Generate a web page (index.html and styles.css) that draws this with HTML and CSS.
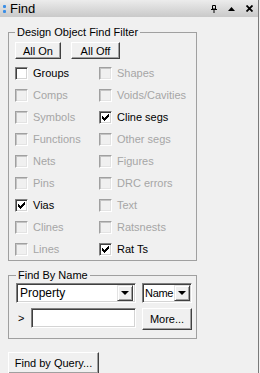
FILE: index.html
```html
<!DOCTYPE html>
<html lang="en">
<head>
    <meta charset="UTF-8">
    <meta name="viewport" content="width=device-width, initial-scale=1.0">
    <title>Find</title>
    <link rel="stylesheet" href="styles.css">
</head>
<body>
    <div class="panel">
        <div class="titlebar">
            <span class="grip"><i></i><i></i></span>
            <span class="title">Find</span>
            <span class="tools">
                <svg width="6" height="8" viewBox="0 0 6 8"><path d="M1.5 0.5h3v3.5h-3z M0 4.5h6 M3 4.5v3.5" fill="none" stroke="#000" stroke-width="1"/></svg>
                <svg width="7" height="4" viewBox="0 0 7 4"><path d="M3.5 0L7 4H0z" fill="#000"/></svg>
                <svg width="7" height="7" viewBox="0 0 7 7"><path d="M0.5 0.5L6.5 6.5M6.5 0.5L0.5 6.5" stroke="#000" stroke-width="1.8"/></svg>
            </span>
        </div>

        <div class="body">
            <fieldset class="group filter">
                <legend>Design Object Find Filter</legend>
                <div class="btnrow">
                    <button class="btn on">All On</button>
                    <button class="btn off">All Off</button>
                </div>
                <div class="checks">
                    <label class="check"><span class="box"></span>Groups</label>
                    <label class="check dis"><span class="box"></span>Shapes</label>
                    <label class="check dis"><span class="box"></span>Comps</label>
                    <label class="check dis"><span class="box"></span>Voids/Cavities</label>
                    <label class="check dis"><span class="box"></span>Symbols</label>
                    <label class="check"><span class="box"><svg class="tick" width="7" height="7" viewBox="0 0 7 7"><path d="M0 2h1v1h1v1h1v-1h1v-1h1v-1h1v-1h1v3h-1v1h-1v1h-1v1h-1v1h-1v-1h-1v-1h-1v-1h-1z"/></svg></span>Cline segs</label>
                    <label class="check dis"><span class="box"></span>Functions</label>
                    <label class="check dis"><span class="box"></span>Other segs</label>
                    <label class="check dis"><span class="box"></span>Nets</label>
                    <label class="check dis"><span class="box"></span>Figures</label>
                    <label class="check dis"><span class="box"></span>Pins</label>
                    <label class="check dis"><span class="box"></span>DRC errors</label>
                    <label class="check"><span class="box"><svg class="tick" width="7" height="7" viewBox="0 0 7 7"><path d="M0 2h1v1h1v1h1v-1h1v-1h1v-1h1v-1h1v3h-1v1h-1v1h-1v1h-1v1h-1v-1h-1v-1h-1v-1h-1z"/></svg></span>Vias</label>
                    <label class="check dis"><span class="box"></span>Text</label>
                    <label class="check dis"><span class="box"></span>Clines</label>
                    <label class="check dis"><span class="box"></span>Ratsnests</label>
                    <label class="check dis"><span class="box"></span>Lines</label>
                    <label class="check"><span class="box"><svg class="tick" width="7" height="7" viewBox="0 0 7 7"><path d="M0 2h1v1h1v1h1v-1h1v-1h1v-1h1v-1h1v3h-1v1h-1v1h-1v1h-1v1h-1v-1h-1v-1h-1v-1h-1z"/></svg></span>Rat Ts</label>
                </div>
            </fieldset>

            <fieldset class="group byname">
                <legend>Find By Name</legend>
                <div class="namerow">
                    <div class="combo prop"><span class="value">Property</span><span class="drop"></span></div>
                    <div class="combo kind"><span class="value">Name</span><span class="drop"></span></div>
                </div>
                <div class="namerow second">
                    <span class="prompt">&gt;</span>
                    <input class="field" type="text">
                    <button class="btn more">More...</button>
                </div>
            </fieldset>

            <button class="btn query">Find by Query...</button>
        </div>
    </div>
</body>
</html>
```

FILE: styles.css
```css
body {
    margin: 0;
    padding: 0;
    background-color: #f0f0f0;
    font-family: "Liberation Sans", Arial, sans-serif;
    font-size: 11px;
    color: #000;
}

.panel {
    width: 258px;
    height: 373px;
    border-right: 1px solid #7a7a7a;
    background-color: #f0f0f0;
    overflow: hidden;
}

/* title bar */

.titlebar {
    height: 17px;
    display: flex;
    align-items: center;
    background: linear-gradient(#ececec, #c9c9c9);
}

.grip {
    display: flex;
    flex-direction: column;
    gap: 2px;
    margin-left: 3px;
    width: 3px;
}

.grip i {
    display: block;
    width: 3px;
    height: 3px;
    border-radius: 1px;
    background-color: #3a8ee6;
}

.title {
    margin-left: 4px;
    font-size: 13px;
}

.tools {
    margin-left: auto;
    display: flex;
    align-items: center;
    gap: 11px;
    margin-right: 5px;
}

.tools svg {
    display: block;
}

/* group boxes */

.body {
    padding-left: 8px;
}

.group {
    margin: 0;
    border: 1px solid #a0a0a0;
    padding: 0 0 0 6px;
    box-sizing: border-box;
    width: 189px;
}

.group legend {
    padding: 0 2px;
    line-height: 13px;
}

.filter {
    margin-top: 9px;
}

.btnrow {
    display: flex;
    gap: 10px;
    margin-top: 3px;
    margin-bottom: 3px;
}

.btn {
    font-family: "Liberation Sans", Arial, sans-serif;
    font-size: 11px;
    color: #000;
    background-color: #f0f0f0;
    border-top: 1px solid #fff;
    border-left: 1px solid #fff;
    border-right: 1px solid #404040;
    border-bottom: 1px solid #404040;
    box-shadow: inset -1px -1px 0 #a0a0a0;
    padding: 0;
    margin: 0;
    height: 17px;
    line-height: 14px;
}

.on {
    width: 46px;
}

.off {
    width: 49px;
}

.checks {
    display: grid;
    grid-template-columns: 84px 1fr;
    grid-auto-rows: 22px;
}

.check {
    display: flex;
    align-items: center;
    gap: 5px;
}

.check.dis {
    color: #a6a6a6;
}

.box {
    width: 13px;
    height: 13px;
    box-sizing: border-box;
    background-color: #fff;
    border-top: 1px solid #808080;
    border-left: 1px solid #808080;
    border-right: 1px solid #fff;
    border-bottom: 1px solid #fff;
    box-shadow: inset 1px 1px 0 #404040, inset -1px -1px 0 #d4d4d4;
    display: flex;
    align-items: center;
    justify-content: center;
}

.dis .box {
    background-color: #f0f0f0;
    border-top-color: #a0a0a0;
    border-left-color: #a0a0a0;
    box-shadow: inset 1px 1px 0 #c4c4c4, inset -1px -1px 0 #e3e3e3;
}

.tick {
    display: block;
    fill: #000;
}

/* find by name */

.byname {
    margin-top: 8px;
    padding: 1px 0 8px 7px;
}

.namerow {
    display: flex;
    align-items: center;
    gap: 6px;
}

.namerow.second {
    margin-top: 3px;
    gap: 0;
}

.combo {
    height: 20px;
    box-sizing: border-box;
    background-color: #fff;
    border-top: 1px solid #808080;
    border-left: 1px solid #808080;
    border-right: 1px solid #fff;
    border-bottom: 1px solid #fff;
    box-shadow: inset 1px 1px 0 #404040, inset -1px -1px 0 #d4d4d4;
    display: flex;
    align-items: center;
    padding: 2px;
}

.combo .value {
    flex: 1;
    font-size: 12px;
    padding-left: 1px;
    white-space: nowrap;
}

.kind {
    width: 50px;
    padding: 2px 1px 2px 2px;
}

.kind .value {
    font-size: 11px;
    padding-left: 0;
    letter-spacing: -0.3px;
}

.prop {
    width: 120px;
}

.drop {
    flex: none;
    width: 16px;
    height: 16px;
    box-sizing: border-box;
    background-color: #f0f0f0;
    border-top: 1px solid #e3e3e3;
    border-left: 1px solid #e3e3e3;
    border-right: 1px solid #404040;
    border-bottom: 1px solid #404040;
    box-shadow: inset 1px 1px 0 #fff, inset -1px -1px 0 #a0a0a0;
    display: flex;
    align-items: center;
    justify-content: center;
}

.drop::after {
    content: "";
    border-left: 4px solid transparent;
    border-right: 4px solid transparent;
    border-top: 4px solid #000;
}

.prompt {
    width: 15px;
    padding-left: 2px;
    box-sizing: border-box;
    font-size: 11px;
}

.field {
    width: 105px;
    height: 20px;
    box-sizing: border-box;
    margin: 0;
    padding: 0;
    background-color: #fff;
    border-top: 1px solid #808080;
    border-left: 1px solid #808080;
    border-right: 1px solid #fff;
    border-bottom: 1px solid #fff;
    box-shadow: inset 1px 1px 0 #404040, inset -1px -1px 0 #d4d4d4;
}

.more {
    width: 50px;
    height: 22px;
    margin-left: 6px;
    margin-top: 2px;
}

.query {
    width: 91px;
    height: 22px;
    margin-top: 13px;
}
```
